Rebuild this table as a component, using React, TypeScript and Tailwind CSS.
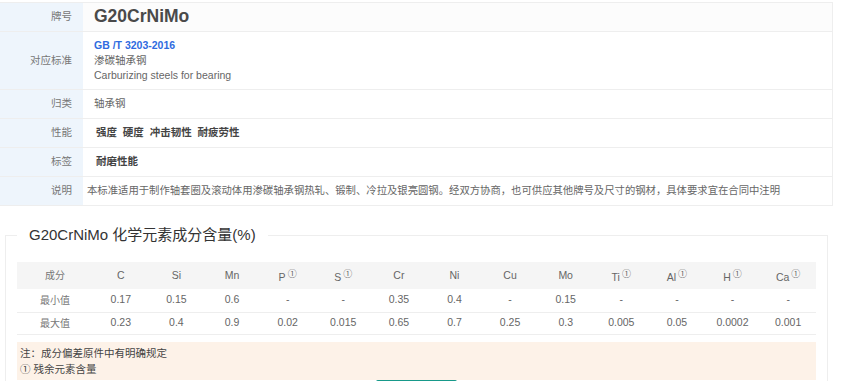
const FONT = { fontFamily: '"Liberation Sans", "Noto Sans CJK SC", sans-serif' };

const elements = [
  { name: 'C', min: '0.17', max: '0.23' },
  { name: 'Si', min: '0.15', max: '0.4' },
  { name: 'Mn', min: '0.6', max: '0.9' },
  { name: 'P', min: '-', max: '0.02', mark: true },
  { name: 'S', min: '-', max: '0.015', mark: true },
  { name: 'Cr', min: '0.35', max: '0.65' },
  { name: 'Ni', min: '0.4', max: '0.7' },
  { name: 'Cu', min: '-', max: '0.25' },
  { name: 'Mo', min: '0.15', max: '0.3' },
  { name: 'Ti', min: '-', max: '0.005', mark: true },
  { name: 'Al', min: '-', max: '0.05', mark: true },
  { name: 'H', min: '-', max: '0.0002', mark: true },
  { name: 'Ca', min: '-', max: '0.001', mark: true },
];

const InfoRow = ({ label, children, className = '' }: { label: string; children: React.ReactNode; className?: string }) => (
  <div className="flex border-b border-[#eeeeee]">
    <div className="w-[83px] shrink-0 bg-[#eef5fc] flex items-center justify-end pr-[11px] text-[10.5px] text-[#777]">
      {label}
    </div>
    <div className={`flex-1 flex flex-col justify-center ${className}`}>{children}</div>
  </div>
);

export default function App() {
  return (
    <div className="w-[860px] h-[381px] bg-white overflow-hidden" style={FONT}>
      <div className="pt-[2px] w-[833px]">
        <div className="border border-[#eeeeee] border-l-0">
          <InfoRow label="牌号" className="h-[28px] pl-[11px] bg-[#fcfcfc]">
            <span className="text-[17.5px] font-bold text-[#4a4a4a] leading-none">G20CrNiMo</span>
          </InfoRow>
          <InfoRow label="对应标准" className="h-[57px] pl-[11px] text-[10.5px] leading-[15px] text-[#666]">
            <span className="font-bold text-[#2f6be0]">GB /T 3203-2016</span>
            <span>渗碳轴承钢</span>
            <span>Carburizing steels for bearing</span>
          </InfoRow>
          <InfoRow label="归类" className="h-[28px] pl-[11px] text-[10.5px] text-[#666]">
            <span>轴承钢</span>
          </InfoRow>
          <InfoRow label="性能" className="h-[28px] pl-[13px] text-[10.5px] text-[#444]">
            <span className="font-bold">强度&nbsp;&nbsp;硬度&nbsp;&nbsp;冲击韧性&nbsp;&nbsp;耐疲劳性</span>
          </InfoRow>
          <InfoRow label="标签" className="h-[28px] pl-[13px] text-[10.5px] text-[#444]">
            <span className="font-bold">耐磨性能</span>
          </InfoRow>
          <div className="flex">
            <div className="w-[83px] shrink-0 bg-[#eef5fc] flex items-center justify-end pr-[11px] text-[10.5px] text-[#777] h-[28px]">
              说明
            </div>
            <div className="flex-1 flex items-center pl-[4px] text-[10.35px] text-[#666] whitespace-nowrap">
              本标准适用于制作轴套圈及滚动体用渗碳轴承钢热轧、锻制、冷拉及银亮圆钢。经双方协商，也可供应其他牌号及尺寸的钢材，具体要求宜在合同中注明
            </div>
          </div>
        </div>
      </div>

      <fieldset className="mt-[19px] ml-[5px] w-[823px] border border-[#eeeeee] px-[11px] pb-0">
        <legend className="ml-0 px-[12px] text-[15px] text-[#333] leading-[20px]">
          G20CrNiMo 化学元素成分含量(%)
        </legend>
        <table className="w-[799px] table-fixed mt-[17px] border-collapse text-[10.5px] text-[#666] text-center">
          <colgroup>
            <col className="w-[76px]" />
            {elements.map((e) => (
              <col key={e.name} />
            ))}
          </colgroup>
          <tbody>
            <tr className="bg-[#f5f5f5] h-[27px]">
              <td className="text-[#777] text-[10px]">成分</td>
              {elements.map((e) => (
                <td key={e.name}>
                  {e.mark ? (
                    <span>
                      <span className="relative top-[2px]">{e.name}</span>
                      <span className="text-[9px] ml-[2px] relative -top-[2px]">①</span>
                    </span>
                  ) : (
                    e.name
                  )}
                </td>
              ))}
            </tr>
            <tr className="h-[23px] border-b border-[#eeeeee]">
              <td className="text-[#777] text-[10px]">最小值</td>
              {elements.map((e) => (
                <td key={e.name}>{e.min}</td>
              ))}
            </tr>
            <tr className="h-[22px] border-b border-[#eeeeee]">
              <td className="text-[#777] text-[10px]">最大值</td>
              {elements.map((e) => (
                <td key={e.name}>{e.max}</td>
              ))}
            </tr>
          </tbody>
        </table>
        <div className="mt-[7px] w-[799px] bg-[#fdf2e8] pt-[3px] px-[3px] h-[38px] text-[10.5px] leading-[16px] text-[#444]">
          <div>注：成分偏差原件中有明确规定</div>
          <div>① 残余元素含量</div>
        </div>
        <div className="ml-[359px] w-[81px] h-[6px] bg-[#17998a] rounded-t-[2px]" />
      </fieldset>
    </div>
  );
}
